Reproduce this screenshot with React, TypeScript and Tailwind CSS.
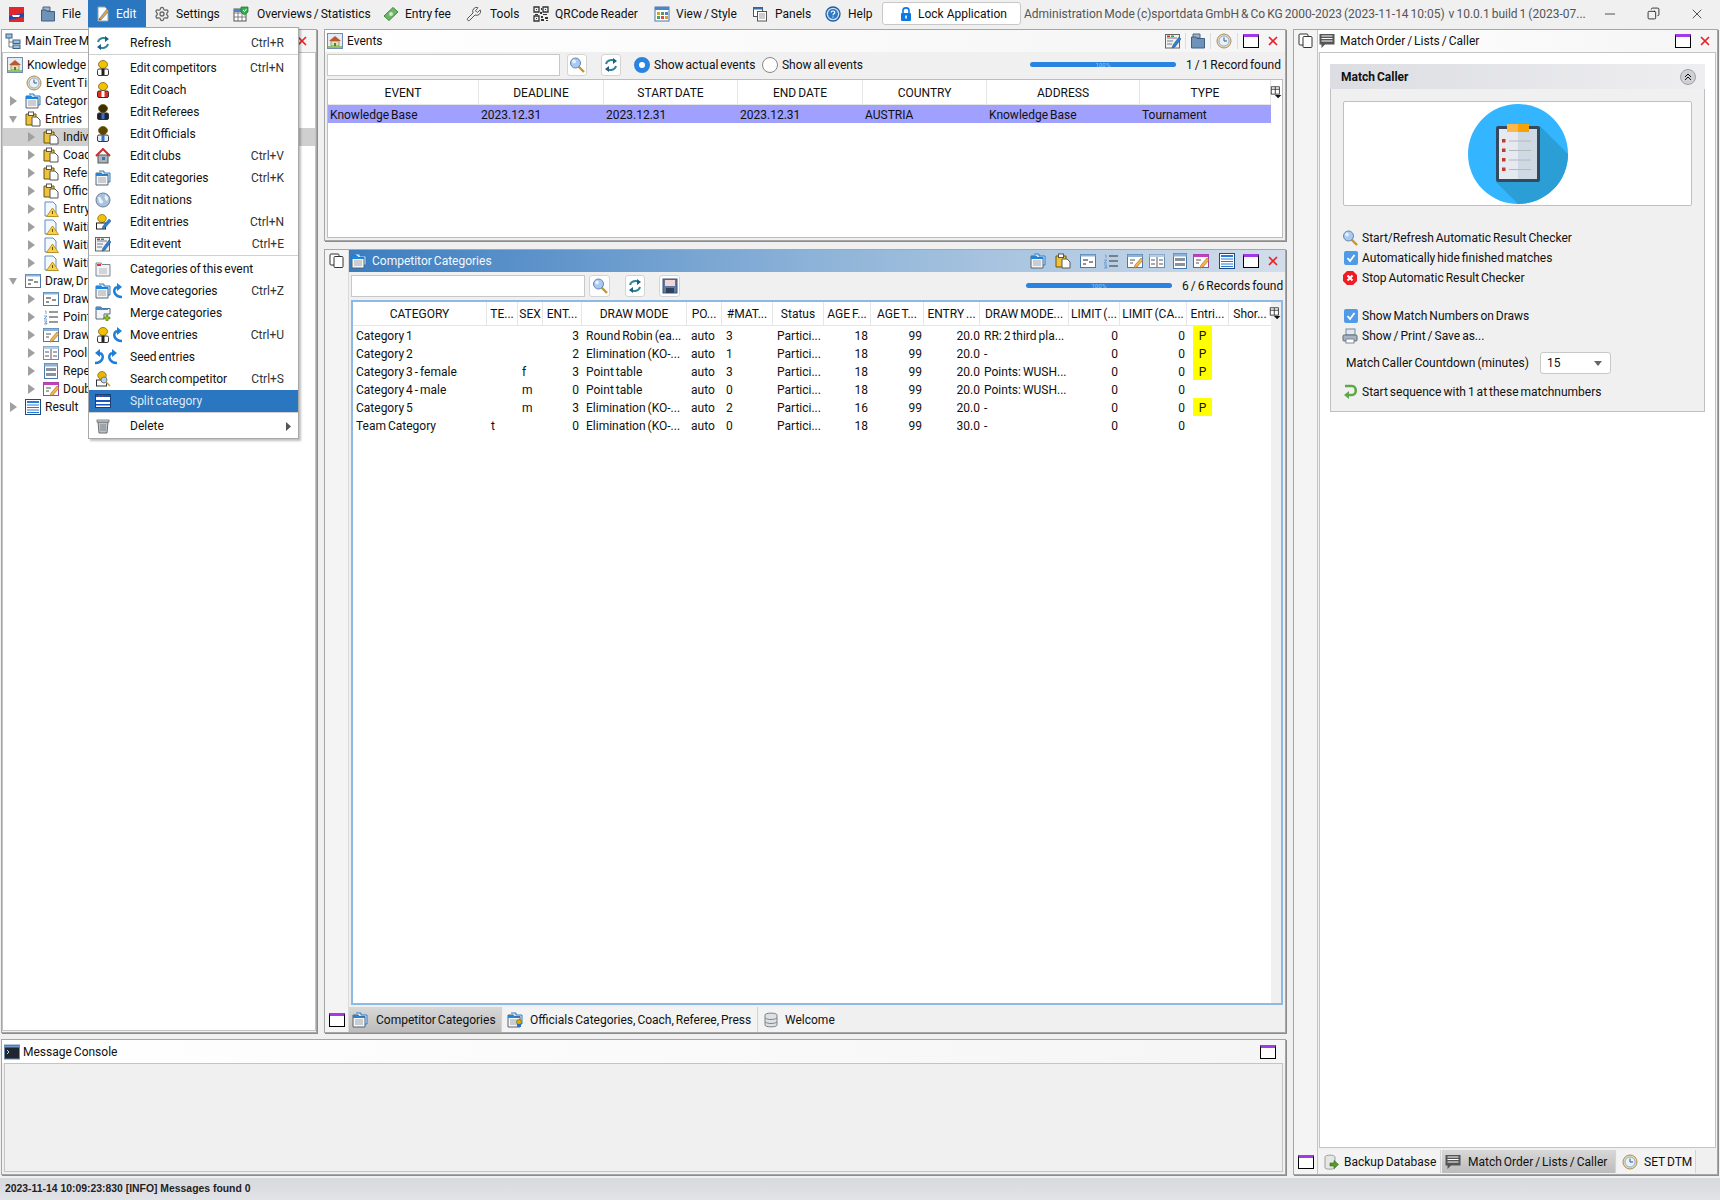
import React from 'react'
import { Settings, Wrench, Minus, X, Copy } from 'lucide-react'

const Svg: React.FC<{ children: React.ReactNode; className?: string }> = ({ children, className }) => (
  <svg viewBox="0 0 16 16" className={className ?? 'w-4 h-4 shrink-0'}>{children}</svg>
)

const Logo = () => (
  <Svg>
    <rect x="1" y="1" width="15" height="15" fill="#e3262b" />
    <path d="M1 10 L16 7 V11 L1 14 Z" fill="#1f4aa8" />
    <path d="M4 9 H12 L11 11 H5 Z" fill="#fff" />
  </Svg>
)
const LockIco = () => (
  <svg viewBox="0 0 12 16" className="w-[12px] h-[16px] shrink-0">
    <path d="M3 7 V4.500 C3 1 9 1 9 4.500 V7" fill="none" stroke="#0a78e6" strokeWidth="1.600" />
    <rect x="1" y="7" width="10" height="8" rx="1" fill="#0a78e6" />
    <rect x="5.200" y="9.500" width="1.600" height="3" fill="#fff" />
  </svg>
)
const FileIco = () => (
  <Svg>
    <path d="M3 1 H10 V5 H3 Z" fill="#9fb4c9" stroke="#4c6783" />
    <path d="M1.500 4 H6 L7 5.500 H14.500 V15 H1.500 Z" fill="#6f93b8" stroke="#3f5f80" />
  </Svg>
)
const EditIco = () => (
  <Svg>
    <path d="M3 1 H10 L13 4 V15 H3 Z" fill="#fff" stroke="#8aa" />
    <path d="M4 13 L12 3 L14 5 L6 14 Z" fill="#e8a33a" stroke="#2f6fc0" strokeWidth=".6" />
    <path d="M3.500 14.500 L4 12.500 L6 14 Z" fill="#d3343a" />
  </Svg>
)
const OverviewIco = () => (
  <Svg>
    <rect x="1" y="3" width="12" height="12" fill="#fff" stroke="#555" />
    <path d="M1 7 H13 M1 11 H13 M5 3 V15 M9 3 V15" stroke="#666" strokeWidth=".8" />
    <rect x="1" y="3" width="12" height="3" fill="#4a86c8" />
    <path d="M8 1 H15 V6 L11.500 9 L8 6 Z" fill="#35b04a" stroke="#14702a" strokeWidth=".7" />
    <path d="M10 4 L11.500 5.500 L13.500 3" stroke="#fff" fill="none" />
  </Svg>
)
const MoneyIco = () => (
  <Svg>
    <path d="M1 10 L10 1.500 L15 6 L6 14.500 Z" fill="#6cb665" stroke="#3e8a3a" />
    <circle cx="8" cy="8" r="2" fill="#cfe8c7" />
  </Svg>
)
const QrIco = () => (
  <Svg>
    <path d="M1 1 H6 V6 H1 Z M10 1 H15 V6 H10 Z M1 10 H6 V15 H1 Z" fill="none" stroke="#333" strokeWidth="1.300" />
    <path d="M3 3 H4 V4 H3 Z M12 3 H13 V4 H12 Z M3 12 H4 V13 H3 Z M8 2 H9 V4 H8 Z M7 6 H9 V8 H7 Z M2 8 H5 V9 H2 Z M10 8 H14 V9 H10 Z M8 10 H10 V12 H8 Z M12 11 H15 V13 H12 Z M8 13 H11 V15 H8 Z M13 14 H15 V15 H13 Z" fill="#333" />
  </Svg>
)
const ViewIco = () => (
  <Svg>
    <rect x="1" y="1" width="14" height="14" fill="#fff" stroke="#4a78b0" />
    <rect x="1" y="1" width="14" height="3" fill="#4a86c8" />
    <rect x="3" y="6" width="3" height="3" fill="#e0a020" />
    <rect x="7" y="6" width="3" height="3" fill="#50a050" />
    <rect x="11" y="6" width="3" height="3" fill="#5080d0" />
    <rect x="3" y="10" width="3" height="3" fill="#50a050" />
    <rect x="7" y="10" width="3" height="3" fill="#d05050" />
    <rect x="11" y="10" width="3" height="3" fill="#e0a020" />
  </Svg>
)
const PanelsIco = () => (
  <Svg>
    <rect x="1.500" y="1.500" width="9" height="9" fill="#fff" stroke="#555" />
    <rect x="1.500" y="1.500" width="9" height="2" fill="#3a6ea8" />
    <rect x="5.500" y="5.500" width="9" height="9.500" fill="#fff" stroke="#555" />
    <path d="M7 8 H13 M7 10 H13 M7 12 H13" stroke="#999" />
  </Svg>
)
const HelpIco = () => (
  <Svg>
    <circle cx="8" cy="8" r="7" fill="#cfe0f2" stroke="#1f5da0" strokeWidth="1.300" />
    <circle cx="8" cy="8" r="5" fill="#2f79c4" />
    <path d="M6.200 6.500 C6.200 4.500 9.800 4.500 9.800 6.500 C9.800 7.800 8 7.800 8 9.300 M8 10.600 V11.600" stroke="#fff" strokeWidth="1.200" fill="none" />
  </Svg>
)
const TreeIco = () => (
  <Svg>
    <path d="M4 4 V14 H8 M4 9 H8" stroke="#6a7a8a" fill="none" />
    <rect x="1" y="1" width="6" height="4" fill="#9cc0e4" stroke="#40607e" />
    <rect x="8" y="7" width="7" height="3.500" fill="#9cc0e4" stroke="#40607e" />
    <rect x="8" y="12" width="7" height="3.500" fill="#9cc0e4" stroke="#40607e" />
  </Svg>
)
const HomeIco = () => (
  <Svg>
    <rect x="0.500" y="0.500" width="15" height="15" fill="#e4edf5" stroke="#6d8db0" />
    <path d="M2 8 L8 3 L14 8 Z" fill="#c2562e" />
    <rect x="4" y="8" width="8" height="5" fill="#e9dcb0" stroke="#806a40" strokeWidth=".6" />
    <rect x="7" y="10" width="2" height="3" fill="#5a7f3a" />
    <rect x="1" y="13" width="14" height="2" fill="#8fc06a" />
  </Svg>
)
const ClockIco = () => (
  <Svg>
    <circle cx="8" cy="8" r="7" fill="#e8dcb8" stroke="#a88e5a" />
    <circle cx="8" cy="8" r="5" fill="#e8f0fa" stroke="#7fa0c8" strokeWidth=".8" />
    <path d="M8 4.500 V8 H11" stroke="#35597f" fill="none" />
  </Svg>
)
const CatIco = ({ person }: { person?: boolean }) => (
  <Svg>
    <path d="M4 1 H9 V3 H15 V12 H13" fill="#cfe6fa" stroke="#2f7fc8" />
    <path d="M1 3 H6 L7 4.500 H13 V15 H1 Z" fill="#f3f5f7" stroke="#5a6570" />
    <path d="M1 3 H6 L7 4.500 H13 V6 H1 Z" fill="#1f86e0" />
    <path d="M3 8 H11 M3 10 H11 M3 12 H11" stroke="#a0a6ac" />
    {person && <circle cx="12" cy="10" r="2.500" fill="#e0b000" stroke="#554400" strokeWidth=".5" />}
    {person && <rect x="10" y="12" width="4" height="3" fill="#2e6fc4" />}
  </Svg>
)
const ClipIco = () => (
  <Svg>
    <path d="M1 3 H11 V14 H1 Z" fill="#eec33c" stroke="#6b5310" />
    <rect x="3.500" y="1" width="5" height="3.500" fill="#fff" stroke="#555" />
    <path d="M7 6 H12 L15 9 V15 H7 Z" fill="#fff" stroke="#555" />
  </Svg>
)
const WarnIco = () => (
  <Svg>
    <path d="M2 1 H10 L13 4 V15 H2 Z" fill="#f2f7fc" stroke="#5a8fc8" />
    <path d="M9.500 7 L15.500 15.500 H3.500 Z" fill="#f6d248" stroke="#a98414" strokeWidth=".8" />
    <path d="M9.500 10 V13" stroke="#6a4a00" />
  </Svg>
)
const DrawIco = () => (
  <Svg>
    <rect x="0.500" y="1.500" width="15" height="13" fill="#fff" stroke="#4a78a8" />
    <rect x="0.500" y="1.500" width="15" height="2" fill="#8db2d8" />
    <path d="M3 7 H8 M3 11 H6 M9 9 H13" stroke="#222" />
  </Svg>
)
const PointsIco = () => (
  <Svg>
    <path d="M6 3 H15 M6 8 H15 M6 13 H15" stroke="#333" />
    <path d="M2 2 H3 V5 M1 7 H4 L1 10 H4 M1 12 H4 L2 14 H4 V15 H1" stroke="#6a98cc" fill="none" strokeWidth=".9" />
  </Svg>
)
const Pencil = () => <path d="M7 15 L8 12 L14 5 L16 7 L10 14 Z" fill="#f0b550" stroke="#a06a20" strokeWidth=".6" />
const DrawEditIco = ({ magenta }: { magenta?: boolean }) => (
  <Svg>
    <rect x="0.500" y="1.500" width="15" height="13" fill="#fff" stroke={magenta ? '#a040a0' : '#4a78a8'} />
    <rect x="0.500" y="1.500" width="15" height="2.500" fill={magenta ? '#c040c0' : '#8db2d8'} />
    <path d="M3 7 H8 M3 10 H6" stroke="#555" />
    <Pencil />
  </Svg>
)
const PoolIco = () => (
  <Svg>
    <rect x="0.500" y="1.500" width="15" height="13" fill="#fff" stroke="#6a8db0" />
    <rect x="0.500" y="1.500" width="15" height="2.500" fill="#b3cce4" />
    <path d="M8 4 V14 M2 7 H6 M2 11 H6 M10 7 H14 M10 11 H14" stroke="#556" />
  </Svg>
)
const RepeIco = () => (
  <Svg>
    <rect x="1.500" y="0.500" width="13" height="15" fill="#fff" stroke="#4a78a8" />
    <rect x="1.500" y="0.500" width="13" height="3" fill="#8db2d8" />
    <rect x="3" y="5" width="10" height="3" fill="#8a92a0" />
    <rect x="3" y="10" width="10" height="3" fill="#8a92a0" />
  </Svg>
)
const ResultIco = () => (
  <Svg>
    <rect x="0.500" y="0.500" width="15" height="15" fill="#fff" stroke="#1f4a80" />
    <rect x="2" y="2" width="12" height="2" fill="#2a78d8" />
    <path d="M2 6 H14 M2 8.500 H14 M2 11 H14 M2 13.500 H14" stroke="#2a78d8" />
  </Svg>
)
const Person = ({ head, body, extra }: { head: string; body: string; extra?: string }) => (
  <Svg>
    <ellipse cx="8" cy="4.500" rx="4.500" ry="4" fill={head} stroke="#6a5000" strokeWidth=".7" />
    <rect x="2.500" y="9" width="11" height="6.500" rx="1.500" fill={body} stroke="#222" strokeWidth=".9" />
    {extra && <rect x="6.500" y="9" width="3" height="6" fill={extra} />}
  </Svg>
)
const HouseIco = () => (
  <Svg>
    <path d="M1 8 L8 1 L15 8" fill="none" stroke="#d02a2a" strokeWidth="2" />
    <rect x="3" y="7" width="10" height="8" fill="#a8b4bf" stroke="#555" />
    <rect x="7" y="9" width="3" height="3" fill="#48709c" />
  </Svg>
)
const GlobeIco = () => (
  <Svg>
    <circle cx="8" cy="8" r="7" fill="#a8c2e2" stroke="#6c7f95" />
    <path d="M3 5 C6 4 6 8 8 9 C9 12 5 12 4 10 Z M10 3 C13 4 14 7 12 9 C10 8 9 5 10 3 Z" fill="#eef3f8" />
  </Svg>
)
const RefreshIco = () => (
  <Svg>
    <path d="M3 7 C4 3 9 2 12 4 M13 9 C12 13 7 14 4 12" stroke="#2d8596" strokeWidth="2" fill="none" />
    <path d="M10 1 L14 4 L10 7 Z M6 9 L2 12 L6 15 Z" fill="#1c5f88" />
  </Svg>
)
const EditEventIco = () => (
  <Svg>
    <rect x="0.500" y="1.500" width="14" height="13.500" fill="#f2f2f2" stroke="#666" />
    <path d="M2 5 H12 M2 8 H8 M2 11 H7" stroke="#6a7a8a" />
    <rect x="2" y="2.500" width="3" height="1.500" fill="#d03030" />
    <rect x="6" y="2.500" width="3" height="1.500" fill="#30a040" />
    <path d="M7 15 L8 12 L14 4 L16 6 L10 14 Z" fill="#3080d0" stroke="#1a4a80" strokeWidth=".5" />
  </Svg>
)
const CatsOfEventIco = () => (
  <Svg>
    <path d="M1 2 H6 L7 3.500 H15 V15 H1 Z" fill="#f2f4f6" stroke="#7a8590" />
    <rect x="2" y="3" width="4" height="2" fill="#d83a3a" />
    <path d="M4 8 H12 M4 10 H12 M4 12 H12" stroke="#b0b6bc" />
  </Svg>
)
const ArrowCurve = ({ flip }: { flip?: boolean }) => (
  <svg viewBox="0 0 12 16" className={`w-[12px] h-4 shrink-0 ${flip ? '-scale-x-100' : ''}`}>
    <path d="M11 14 C3 14 1 6 6 4" fill="none" stroke="#1f7fd8" strokeWidth="2.600" />
    <path d="M6 0 L11 4 L6 8 Z" fill="#1f7fd8" />
  </svg>
)
const MoveCatIco = () => (
  <span className="flex items-center"><CatIco /><ArrowCurve /></span>
)
const MergeIco = () => (
  <Svg>
    <path d="M1 2 H6 L7 3.500 H15 V9 H9 V14 H1 Z" fill="#f2f4f6" stroke="#55697c" />
    <path d="M1 2 H6 L7 3.500 H13 V5 H1 Z" fill="#3f8fd8" />
    <path d="M9 12 H11 V10 H13 V12 H15 V14 H13 V16 H11 V14 H9 Z" fill="#8fc020" stroke="#3c6a00" strokeWidth=".5" />
  </Svg>
)
const MoveEntryIco = () => (
  <span className="flex items-center">
    <Person head="#f2c100" body="#fff" extra="#222" />
    <ArrowCurve />
  </span>
)
const SeedIco = () => (
  <span className="flex items-center -ml-[1px]"><ArrowCurve flip /><ArrowCurve /></span>
)
const SearchPersonIco = () => (
  <Svg>
    <ellipse cx="7" cy="4.500" rx="4.300" ry="4" fill="#e8b800" stroke="#6a5000" strokeWidth=".6" />
    <rect x="1.500" y="9" width="10" height="6" fill="#fff" stroke="#333" />
    <circle cx="9" cy="9" r="3" fill="#b8d0ec" stroke="#6a7a90" />
    <path d="M11 11 L15 15" stroke="#c89a40" strokeWidth="1.500" />
  </Svg>
)
const SplitIco = () => (
  <Svg>
    <rect x="0.500" y="1.500" width="15" height="13" fill="#fff" stroke="#1b3f70" />
    <rect x="1" y="2" width="14" height="2" fill="#1d55c0" />
    <path d="M3 3 H5 M7 3 H8" stroke="#e04040" />
    <rect x="1" y="7" width="14" height="2" fill="#1d55c0" />
    <rect x="1" y="11" width="14" height="1.500" fill="#1d55c0" />
  </Svg>
)
const TrashIco = () => (
  <Svg>
    <path d="M3 4 H13 L12 15 H4 Z" fill="#bfc4c8" stroke="#6a6f74" />
    <path d="M6 6 V13 M8 6 V13 M10 6 V13" stroke="#808488" />
    <rect x="2" y="2" width="12" height="2" fill="#d8dadc" stroke="#6a6f74" strokeWidth=".8" />
  </Svg>
)
const SearchIco = () => (
  <Svg>
    <path d="M9 9 L15 15" stroke="#c9932e" strokeWidth="2.400" />
    <circle cx="6.500" cy="6" r="5" fill="#a8c9f0" stroke="#6385b0" />
    <circle cx="5" cy="4.500" r="2" fill="#e3effb" />
  </Svg>
)
const SaveIco = () => (
  <Svg>
    <rect x="1" y="1" width="14" height="14" fill="#5c7aa2" stroke="#3c5478" />
    <rect x="3" y="2" width="10" height="6" fill="#f4d4d4" />
    <rect x="4" y="10" width="8" height="5" fill="#30415c" />
  </Svg>
)
const WinIco = () => (
  <span className="w-[16px] h-[14px] border border-black border-t-[3px] border-t-[#a23be6] bg-white shrink-0 block" />
)
const CloseIco = () => <X className="w-[14px] h-[14px] shrink-0 text-[#e8232a]" strokeWidth={3} />
const PanesIco = () => (
  <Svg>
    <rect x="1" y="1" width="9" height="11" rx="1" fill="#fff" stroke="#333" />
    <rect x="5" y="3.500" width="9" height="11" rx="1" fill="#fff" stroke="#333" />
  </Svg>
)
const ChatIco = () => (
  <Svg>
    <path d="M0.500 1 H15.500 V11.500 H6 L2.500 15 V11.500 H0.500 Z" fill="#555" />
    <path d="M2.500 3 H13.500 M2.500 5.500 H13.500 M2.500 8 H13.500" stroke="#fff" />
  </Svg>
)
const ColsIco = () => (
  <svg viewBox="0 0 16 16" className="w-[13px] h-[13px] shrink-0">
    <rect x="1.500" y="1" width="10" height="9" fill="#fff" stroke="#222" />
    <path d="M1.500 4 H11.500 M6.500 1 V10" stroke="#222" />
    <path d="M6 11 H14 L10 15 Z" fill="#111" />
  </svg>
)
const CheckIco = () => (
  <span className="w-[14px] h-[14px] rounded-[2px] bg-[#4f9be8] flex items-center justify-center shrink-0">
    <svg viewBox="0 0 10 10" className="w-[10px] h-[10px]"><path d="M1.500 5 L4 8 L8.500 2" fill="none" stroke="#fff" strokeWidth="1.800" /></svg>
  </span>
)
const StopIco = () => (
  <Svg>
    <path d="M5 1 H11 L15 5 V11 L11 15 H5 L1 11 V5 Z" fill="#ee1c25" />
    <path d="M5.500 5.500 L10.500 10.500 M10.500 5.500 L5.500 10.500" stroke="#fff" strokeWidth="2" />
  </Svg>
)
const PrintIco = () => (
  <Svg>
    <rect x="4" y="1" width="9" height="6" fill="#dfe8f2" stroke="#7a8898" />
    <rect x="1" y="7" width="14" height="6" rx="1" fill="#a8b4c2" stroke="#5c6a78" />
    <rect x="4" y="11" width="8" height="4" fill="#fff" stroke="#7a8898" />
  </Svg>
)
const GreenArrowIco = () => (
  <Svg>
    <path d="M3 2 H10 C15 2 15 11 10 11 H5" fill="none" stroke="#5fa84a" strokeWidth="2.600" />
    <path d="M7 7 L2 11 L7 15 Z" fill="#5fa84a" />
  </Svg>
)
const BackupIco = () => (
  <Svg>
    <path d="M2 3 C2 0.500 12 0.500 12 3 V14 C12 15.500 2 15.500 2 14 Z" fill="#e4e7e4" stroke="#9aa09a" />
    <path d="M7 9 H11 V6.500 L15.500 10.500 L11 14.500 V12 H7 Z" fill="#5a9a2e" stroke="#2d6a10" strokeWidth=".6" />
  </Svg>
)
const DbIco = () => (
  <Svg>
    <path d="M2 3 C2 0.500 14 0.500 14 3 V13 C14 15.500 2 15.500 2 13 Z" fill="#dde1e5" stroke="#7c8489" />
    <path d="M2 6 C5 8 11 8 14 6 M2 10 C5 12 11 12 14 10" stroke="#7c8489" fill="none" />
  </Svg>
)
const ConsoleIco = () => (
  <Svg>
    <rect x="0.500" y="1" width="15" height="14" fill="#1f2630" stroke="#6c8db0" />
    <rect x="1" y="1.500" width="14" height="2" fill="#6f9bd0" />
    <path d="M3 6 L5 8 L3 10" stroke="#fff" fill="none" strokeWidth=".8" />
  </Svg>
)

const Triangle = ({ open }: { open?: boolean }) => (
  <svg viewBox="0 0 8 10" className="w-2 h-[10px] shrink-0">
    {open ? <path d="M0 2 H8 L4 9 Z" fill="#a0a0a0" /> : <path d="M1 0 L8 5 L1 10 Z" fill="#a0a0a0" />}
  </svg>
)

const topMenu = [
  { label: 'File', icon: <FileIco />, cls: 'w-[52px] pl-[4px] gap-[6px]' },
  { label: 'Edit', icon: <EditIco />, cls: 'w-[58px] pl-[7px] gap-[5px] bg-[#2a76c0] text-white' },
  { label: 'Settings', icon: <Settings className="w-4 h-4 text-[#666]" />, cls: 'w-[79px] pl-[8px] gap-[6px]' },
  { label: 'Overviews / Statistics', icon: <OverviewIco />, cls: 'w-[150px] pl-[8px] gap-[8px]' },
  { label: 'Entry fee', icon: <MoneyIco />, cls: 'w-[83px] pl-[8px] gap-[6px]' },
  { label: 'Tools', icon: <Wrench className="w-4 h-4 text-[#555]" strokeWidth={1.5} />, cls: 'w-[67px] pl-[8px] gap-[8px]' },
  { label: 'QRCode Reader', icon: <QrIco />, cls: 'w-[121px] pl-[8px] gap-[6px]' },
  { label: 'View / Style', icon: <ViewIco />, cls: 'w-[98px] pl-[8px] gap-[6px]' },
  { label: 'Panels', icon: <PanelsIco />, cls: 'w-[73px] pl-[8px] gap-[7px]' },
  { label: 'Help', icon: <HelpIco />, cls: 'w-[65px] pl-[8px] gap-[7px]' },
]

const menuItems: (null | { label: string; icon: React.ReactNode; key?: string; active?: boolean; arrow?: boolean })[] = [
  { label: 'Refresh', icon: <RefreshIco />, key: 'Ctrl+R' },
  null,
  { label: 'Edit competitors', icon: <Person head="#f2c100" body="#fff" extra="#222" />, key: 'Ctrl+N' },
  { label: 'Edit Coach', icon: <Person head="#f2c100" body="#e03020" extra="#fff" /> },
  { label: 'Edit Referees', icon: <Person head="#3a3000" body="#223" extra="#3a70c0" /> },
  { label: 'Edit Officials', icon: <Person head="#5a4800" body="#e8eef6" extra="#3a70c0" /> },
  { label: 'Edit clubs', icon: <HouseIco />, key: 'Ctrl+V' },
  { label: 'Edit categories', icon: <CatIco />, key: 'Ctrl+K' },
  { label: 'Edit nations', icon: <GlobeIco /> },
  {
    label: 'Edit entries',
    icon: (
      <Svg>
        <ellipse cx="7" cy="4.500" rx="4.300" ry="4" fill="#f2c100" stroke="#6a5000" strokeWidth=".6" />
        <rect x="1.500" y="9" width="9" height="6" fill="#fff" stroke="#222" />
        <path d="M7 15 L8 12 L14 5 L16 7 L10 14 Z" fill="#3080d0" stroke="#1a4a80" strokeWidth=".5" />
      </Svg>
    ),
    key: 'Ctrl+N',
  },
  { label: 'Edit event', icon: <EditEventIco />, key: 'Ctrl+E' },
  null,
  { label: 'Categories of this event', icon: <CatsOfEventIco /> },
  { label: 'Move categories', icon: <MoveCatIco />, key: 'Ctrl+Z' },
  { label: 'Merge categories', icon: <MergeIco /> },
  { label: 'Move entries', icon: <MoveEntryIco />, key: 'Ctrl+U' },
  { label: 'Seed entries', icon: <SeedIco /> },
  { label: 'Search competitor', icon: <SearchPersonIco />, key: 'Ctrl+S' },
  { label: 'Split category', icon: <SplitIco />, active: true },
  null,
  { label: 'Delete', icon: <TrashIco />, arrow: true },
]

const treeRows: { label: string; icon: React.ReactNode; cls: string; arrow?: 'open' | 'closed'; active?: boolean }[] = [
  { label: 'Knowledge Base', icon: <HomeIco />, cls: 'pl-[4px]' },
  { label: 'Event Timetable', icon: <ClockIco />, cls: 'pl-[23px]' },
  { label: 'Categories', icon: <CatIco />, cls: 'pl-[6px]', arrow: 'closed' },
  { label: 'Entries', icon: <ClipIco />, cls: 'pl-[6px]', arrow: 'open' },
  { label: 'Individual', icon: <ClipIco />, cls: 'pl-[24px]', arrow: 'closed', active: true },
  { label: 'Coach', icon: <ClipIco />, cls: 'pl-[24px]', arrow: 'closed' },
  { label: 'Referee', icon: <ClipIco />, cls: 'pl-[24px]', arrow: 'closed' },
  { label: 'Officials', icon: <ClipIco />, cls: 'pl-[24px]', arrow: 'closed' },
  { label: 'Entry', icon: <WarnIco />, cls: 'pl-[24px]', arrow: 'closed' },
  { label: 'Waiting', icon: <WarnIco />, cls: 'pl-[24px]', arrow: 'closed' },
  { label: 'Waiting', icon: <WarnIco />, cls: 'pl-[24px]', arrow: 'closed' },
  { label: 'Waiting', icon: <WarnIco />, cls: 'pl-[24px]', arrow: 'closed' },
  { label: 'Draw, Draw', icon: <DrawIco />, cls: 'pl-[6px]', arrow: 'open' },
  { label: 'Draw', icon: <DrawIco />, cls: 'pl-[24px]', arrow: 'closed' },
  { label: 'Point', icon: <PointsIco />, cls: 'pl-[24px]', arrow: 'closed' },
  { label: 'Draw', icon: <DrawEditIco />, cls: 'pl-[24px]', arrow: 'closed' },
  { label: 'Pool', icon: <PoolIco />, cls: 'pl-[24px]', arrow: 'closed' },
  { label: 'Repe', icon: <RepeIco />, cls: 'pl-[24px]', arrow: 'closed' },
  { label: 'Doub', icon: <DrawEditIco magenta />, cls: 'pl-[24px]', arrow: 'closed' },
  { label: 'Result', icon: <ResultIco />, cls: 'pl-[6px]', arrow: 'closed' },
]

const eventCols = ['w-[151px]', 'w-[125px]', 'w-[134px]', 'w-[125px]', 'w-[124px]', 'w-[153px]', 'w-[131px]']
const eventHead = ['EVENT', 'DEADLINE', 'START DATE', 'END DATE', 'COUNTRY', 'ADDRESS', 'TYPE']
const eventRow = ['Knowledge Base', '2023.12.31', '2023.12.31', '2023.12.31', 'AUSTRIA', 'Knowledge Base', 'Tournament']

const catCols = [
  'w-[134px]', 'w-[31px]', 'w-[25px]', 'w-[39px]', 'w-[105px]', 'w-[35px]', 'w-[51px]', 'w-[51px]',
  'w-[47px]', 'w-[53px]', 'w-[56px]', 'w-[89px]', 'w-[51px]', 'w-[67px]', 'w-[42px]', 'w-[43px]',
]
const catHead = ['CATEGORY', 'TE...', 'SEX', 'ENT...', 'DRAW MODE', 'PO...', '#MAT...', 'Status', 'AGE F...', 'AGE T...', 'ENTRY ...', 'DRAW MODE...', 'LIMIT (...', 'LIMIT (CA...', 'Entri...', 'Shor...']
// padding of each data cell, numbers sit on the right edge
const catCellCls: Record<number, string> = {
  0: 'pl-[3px]',
  3: 'text-right pr-[3px]',
  8: 'text-right pr-[3px]',
  9: 'text-right pr-[2px]',
  10: 'text-right',
  12: 'text-right pr-[2px]',
  13: 'text-right pr-[2px]',
}
const catRows = [
  ['Category 1', '', '', '3', 'Round Robin (ea...', 'auto', '3', 'Partici...', '18', '99', '20.0', 'RR: 2 third pla...', '0', '0', 'P', ''],
  ['Category 2', '', '', '2', 'Elimination (KO-...', 'auto', '1', 'Partici...', '18', '99', '20.0', '-', '0', '0', 'P', ''],
  ['Category 3 - female', '', 'f', '3', 'Point table', 'auto', '3', 'Partici...', '18', '99', '20.0', 'Points: WUSH...', '0', '0', 'P', ''],
  ['Category 4 - male', '', 'm', '0', 'Point table', 'auto', '0', 'Partici...', '18', '99', '20.0', 'Points: WUSH...', '0', '0', '', ''],
  ['Category 5', '', 'm', '3', 'Elimination (KO-...', 'auto', '2', 'Partici...', '16', '99', '20.0', '-', '0', '0', 'P', ''],
  ['Team Category', 't', '', '0', 'Elimination (KO-...', 'auto', '0', 'Partici...', '18', '99', '30.0', '-', '0', '0', '', ''],
]

const ToolBtn = ({ children, cls }: { children: React.ReactNode; cls: string }) => (
  <button className={`h-[22px] shrink-0 rounded-[3px] border border-[#d4d4d4] bg-white flex items-center justify-center ${cls}`}>
    {children}
  </button>
)

const Progress = ({ cls }: { cls: string }) => (
  <div className={`h-[5px] rounded-full bg-[#2a83e0] flex items-center justify-center ${cls}`}>
    <span className="text-[6px] leading-[5px] text-[#9cc4ee]">100 %</span>
  </div>
)

const HeaderCell = ({ label, cls }: { label: string; cls: string }) => (
  <div className={`${cls} shrink-0 h-full flex items-center justify-center border-r border-[#e6e6e6] whitespace-nowrap`}>
    {label}
  </div>
)

const Tab = ({ icon, label, cls, active }: { icon: React.ReactNode; label: string; cls: string; active?: boolean }) => (
  <div
    className={`${cls} shrink-0 h-full flex items-center whitespace-nowrap border-r border-[#d4d4d4] ${
      active ? 'bg-gradient-to-b from-[#d8d8d8] to-[#bcbcbc]' : 'bg-[#f3f3f3]'
    }`}
  >
    {icon}
    <span>{label}</span>
  </div>
)

const panel = 'border border-[#a6a6a6] shadow-[1px_1px_0_#8c8c8c] bg-[#f0f0f0]'

export default function App() {
  return (
    <div className="relative w-[1720px] h-[1200px] overflow-hidden bg-[#f0f0f0] text-[12px] leading-[16px] [word-spacing:-1px] text-[#111] font-['Roboto','Open_Sans',sans-serif]">
      {/* Top menu */}
      <div className="h-[27px] flex items-stretch pl-[8px]">
        <div className="flex items-center w-[28px] shrink-0"><Logo /></div>
        {topMenu.map((m) => (
          <div key={m.label} className={`flex items-center shrink-0 whitespace-nowrap ${m.cls}`}>
            {m.icon}
            <span>{m.label}</span>
          </div>
        ))}
        <button className="my-[2px] w-[139px] shrink-0 rounded-[3px] border border-[#c8c8c8] bg-white flex items-center pl-[17px] gap-[6px]">
          <LockIco />
          <span className="whitespace-nowrap">Lock Application</span>
        </button>
        <div className="ml-[3px] flex items-center whitespace-nowrap text-[#555] w-[566px] shrink-0">
          Administration Mode (c)sportdata GmbH &amp; Co KG 2000-2023 (2023-11-14 10:05)&nbsp; v 10.0.1 build 1 (2023-07...
        </div>
        <div className="flex items-center gap-[29px] pl-[12px] text-black">
          <Minus className="w-[16px] h-[16px]" strokeWidth={1} />
          <Copy className="w-[13px] h-[13px] -scale-x-100" strokeWidth={1.4} />
          <X className="w-[16px] h-[16px]" strokeWidth={1} />
        </div>
      </div>

      {/* Body */}
      <div className="h-[1151px] flex pl-[1px] pt-[2px]">
        <div className="w-[1285px] shrink-0 flex flex-col">
          <div className="h-[1004px] flex gap-[7px]">
            {/* Main tree */}
            <div className={`w-[316px] shrink-0 flex flex-col ${panel}`}>
              <div className="h-[22px] shrink-0 flex items-center pl-[3px] pr-[7px] gap-[4px] bg-gradient-to-r from-white to-[#f5f5f5]">
                <TreeIco />
                <span className="whitespace-nowrap">Main Tree Menu</span>
                <span className="ml-auto"><CloseIco /></span>
              </div>
              <div className="flex-1 mb-[1px] border border-[#c4c4c4] bg-white pt-[3px]">
                {treeRows.map((r, i) => (
                  <div key={i} className={`h-[18px] flex items-center ${r.cls} ${r.active ? 'bg-[#cfcfcf]' : ''}`}>
                    {r.arrow && <span className="mr-[8px]"><Triangle open={r.arrow === 'open'} /></span>}
                    {r.icon}
                    <span className="ml-[4px] whitespace-nowrap">{r.label}</span>
                  </div>
                ))}
              </div>
            </div>

            {/* Centre */}
            <div className="w-[962px] shrink-0 flex flex-col gap-[8px]">
              <div className={`h-[212px] shrink-0 flex flex-col ${panel}`}>
                <div className="h-[22px] shrink-0 flex items-center pl-[2px] pr-[5px] bg-gradient-to-r from-white to-[#f5f5f5]">
                  <HomeIco />
                  <span className="ml-[4px]">Events</span>
                  <div className="ml-auto flex items-center">
                    <span className="pr-[4px] border-r border-[#dcdcdc]"><EditEventIco /></span>
                    <span className="px-[4px] border-r border-[#dcdcdc]"><FileIco /></span>
                    <span className="px-[5px] border-r border-[#dcdcdc]"><ClockIco /></span>
                    <span className="ml-[5px] mr-[7px]"><WinIco /></span>
                    <CloseIco />
                  </div>
                </div>
                <div className="h-[27px] shrink-0 flex items-center pl-[2px] pb-[2px]">
                  <div className="w-[233px] h-[22px] shrink-0 bg-white border border-[#c8c8c8]" />
                  <ToolBtn cls="ml-[7px] w-[20px]"><SearchIco /></ToolBtn>
                  <ToolBtn cls="ml-[14px] w-[20px]"><RefreshIco /></ToolBtn>
                  <span className="ml-[13px] w-[16px] h-[16px] rounded-full border-[5px] border-[#2a83e0] bg-white shrink-0" />
                  <span className="ml-[4px] whitespace-nowrap">Show actual events</span>
                  <span className="ml-auto w-[16px] h-[16px] rounded-full border border-[#888] bg-white shrink-0" />
                  <span className="ml-[4px] whitespace-nowrap">Show all events</span>
                  <Progress cls="ml-[167px] w-[146px] shrink-0" />
                  <span className="ml-[10px] w-[99px] shrink-0 whitespace-nowrap">1 / 1 Record found</span>
                </div>
                <div className="flex-1 mx-[2px] mb-[2px] border border-[#bdbdbd] bg-white relative">
                  <div className="h-[25px] flex border-b border-[#e6e6e6] w-[943px]">
                    {eventHead.map((h, i) => <HeaderCell key={h} label={h} cls={`${eventCols[i]} pt-[1px]`} />)}
                  </div>
                  <div className="h-[18px] flex items-center bg-[#a0a0ff] w-[943px] pt-[1px]">
                    {eventRow.map((c, i) => (
                      <div key={i} className={`${eventCols[i]} shrink-0 pl-[2px] whitespace-nowrap`}>{c}</div>
                    ))}
                  </div>
                  <div className="absolute top-[6px] -right-[1px]"><ColsIco /></div>
                </div>
              </div>

              <div className={`flex-1 flex min-h-0 ${panel}`}>
                <div className="w-[24px] shrink-0 flex flex-col items-center justify-between pt-[3px] pb-[5px] border-r border-[#dadada] bg-[#f4f4f4]">
                  <PanesIco />
                  <WinIco />
                </div>
                <div className="flex-1 flex flex-col min-w-0">
                  <div className="h-[22px] shrink-0 flex items-center pl-[2px] pr-[5px] bg-gradient-to-r from-[#3a7dc0] via-[#8db3d8] to-[#d2deea]">
                    <CatIco />
                    <span className="ml-[5px] text-[#f4f8fc]">Competitor Categories</span>
                    <div className="ml-auto flex items-center">
                      <CatIco />
                      <span className="ml-[9px]"><ClipIco /></span>
                      <span className="ml-[9px]"><DrawIco /></span>
                      <span className="ml-[7px]"><PointsIco /></span>
                      <span className="ml-[8px]"><DrawEditIco /></span>
                      <span className="ml-[6px]"><PoolIco /></span>
                      <span className="ml-[7px]"><RepeIco /></span>
                      <span className="ml-[5px]"><DrawEditIco magenta /></span>
                      <span className="ml-[10px]"><ResultIco /></span>
                      <span className="ml-[8px] mr-[7px]"><WinIco /></span>
                      <CloseIco />
                    </div>
                  </div>
                  <div className="h-[28px] shrink-0 flex items-center pl-[2px] pb-[1px]">
                    <div className="w-[234px] h-[22px] shrink-0 bg-white border border-[#c8c8c8]" />
                    <ToolBtn cls="ml-[4px] w-[21px]"><SearchIco /></ToolBtn>
                    <ToolBtn cls="ml-[15px] w-[20px]"><RefreshIco /></ToolBtn>
                    <ToolBtn cls="ml-[14px] w-[21px]"><SaveIco /></ToolBtn>
                    <Progress cls="ml-[346px] w-[146px] shrink-0" />
                    <span className="ml-[10px] w-[103px] shrink-0 whitespace-nowrap">6 / 6 Records found</span>
                  </div>
                  <div className="flex-1 mx-[2px] border-2 border-[#8db9e6] bg-white relative min-h-0">
                    <div className="h-[24px] flex border-b border-[#e6e6e6] w-[919px]">
                      {catHead.map((h, i) => <HeaderCell key={h} label={h} cls={catCols[i]} />)}
                    </div>
                    {catRows.map((row, ri) => (
                      <div key={ri} className="h-[18px] flex items-center">
                        {row.map((c, i) =>
                          i === 14 ? (
                            <div key={i} className={`${catCols[i]} shrink-0 h-full pl-[6px]`}>
                              {c && <span className="w-[19px] h-full pt-[1px] bg-[#ffff00] flex items-center justify-center">{c}</span>}
                            </div>
                          ) : (
                            <div key={i} className={`${catCols[i]} shrink-0 pt-[1px] whitespace-nowrap ${catCellCls[i] ?? 'pl-[4px]'}`}>
                              {c}
                            </div>
                          ),
                        )}
                      </div>
                    ))}
                    <div className="absolute top-0 right-0 w-[10px] h-full bg-[#f0f0f0]">
                      <div className="absolute top-[5px] -right-[1px]"><ColsIco /></div>
                    </div>
                  </div>
                  <div className="h-[27px] shrink-0 flex items-stretch pt-[2px]">
                    <Tab active cls="w-[153px] gap-[8px] pl-[3px]" icon={<CatIco />} label="Competitor Categories" />
                    <Tab cls="w-[255px] gap-[7px] pl-[4px] ml-[1px]" icon={<CatIco person />} label="Officials Categories, Coach, Referee, Press" />
                    <Tab cls="w-[70px] gap-[6px] pl-[4px] ml-[1px] border-r-0" icon={<DbIco />} label="Welcome" />
                  </div>
                </div>
              </div>
            </div>
          </div>

          {/* Console */}
          <div className={`mt-[6px] h-[136px] flex flex-col ${panel}`}>
            <div className="h-[23px] shrink-0 flex items-center pl-[2px] pr-[9px] bg-gradient-to-r from-white to-[#f5f5f5]">
              <ConsoleIco />
              <span className="ml-[3px]">Message Console</span>
              <span className="ml-auto"><WinIco /></span>
            </div>
            <div className="flex-1 mx-[2px] mb-[2px] border border-[#c4c4c4] bg-[#f0f0f0]" />
          </div>
        </div>

        {/* Right panel */}
        <div className={`ml-[7px] w-[425px] h-[1146px] shrink-0 flex ${panel}`}>
          <div className="w-[24px] shrink-0 flex flex-col items-center justify-between pt-[3px] pb-[5px] border-r border-[#c4c4c4] bg-[#f4f4f4]">
            <PanesIco />
            <WinIco />
          </div>
          <div className="flex-1 flex flex-col min-w-0">
            <div className="h-[22px] shrink-0 flex items-center pl-[1px] pr-[5px] bg-gradient-to-r from-white to-[#f5f5f5]">
              <ChatIco />
              <span className="ml-[5px]">Match Order / Lists / Caller</span>
              <span className="ml-auto mr-[7px]"><WinIco /></span>
              <CloseIco />
            </div>
            <div className="flex-1 mx-[1px] border border-[#c4c4c4] bg-white px-[10px] pt-[11px] min-h-0">
              <div className="h-[25px] flex items-center justify-between pl-[11px] pr-[9px] bg-gradient-to-r from-[#dcdde2] to-[#eeeef0]">
                <span className="font-bold">Match Caller</span>
                <span className="w-[16px] h-[16px] rounded-full bg-[#cfd0d4] border border-[#a0a0a0] flex items-center justify-center">
                  <svg viewBox="0 0 10 10" className="w-[10px] h-[10px]"><path d="M2 5 L5 2 L8 5 M2 8 L5 5 L8 8" fill="none" stroke="#111" /></svg>
                </span>
              </div>
              <div className="h-[323px] border border-t-0 border-[#c0c0c0] bg-[#f0f0f0] px-[12px] pt-[12px]">
                <div className="h-[105px] rounded-[2px] border border-[#c0c0c0] bg-white flex items-center justify-center">
                  <svg viewBox="0 0 100 100" className="w-[100px] h-[100px]">
                    <defs><clipPath id="disc"><circle cx="50" cy="50" r="50" /></clipPath></defs>
                    <circle cx="50" cy="50" r="50" fill="#33b6ff" />
                    <polygon points="72,22 110,60 110,110 60,110 28,78" fill="#2b9ed6" clipPath="url(#disc)" />
                    <rect x="28" y="22" width="44" height="56" rx="2" fill="#34495e" />
                    <rect x="31" y="25" width="19" height="50" fill="#e6eaf0" />
                    <rect x="50" y="25" width="19" height="50" fill="#cfd9e3" />
                    <rect x="39" y="20" width="11" height="8" fill="#ffb64a" />
                    <rect x="50" y="20" width="11" height="8" fill="#f6a200" />
                    <rect x="34" y="35" width="3.500" height="3.500" fill="#c0392b" />
                    <rect x="34" y="44.500" width="3.500" height="3.500" fill="#c0392b" />
                    <rect x="34" y="54" width="3.500" height="3.500" fill="#c0392b" />
                    <rect x="34" y="63.500" width="3.500" height="3.500" fill="#c0392b" />
                    <path d="M41 37 H63 M41 46.500 H63 M41 56 H63 M41 65.500 H63" stroke="#b4b8ba" />
                  </svg>
                </div>
                <div className="pt-[22px] flex flex-col">
                  <div className="h-[20px] flex items-center gap-[4px] -ml-[1px]"><SearchIco /><span>Start/Refresh Automatic Result Checker</span></div>
                  <div className="h-[20px] flex items-center gap-[4px] pl-[1px]"><CheckIco /><span>Automatically hide finished matches</span></div>
                  <div className="h-[20px] flex items-center gap-[4px] -ml-[1px]"><StopIco /><span>Stop Automatic Result Checker</span></div>
                  <div className="h-[20px] mt-[18px] flex items-center gap-[4px] pl-[1px]"><CheckIco /><span>Show Match Numbers on Draws</span></div>
                  <div className="h-[20px] flex items-center gap-[4px] -ml-[1px]"><PrintIco /><span>Show / Print / Save as...</span></div>
                  <div className="mt-[6px] h-[22px] flex items-center pl-[3px]">
                    <span className="w-[194px] shrink-0 whitespace-nowrap">Match Caller Countdown (minutes)</span>
                    <div className="w-[71px] h-[22px] rounded-[3px] border border-[#c8c8c8] bg-white flex items-center justify-between pl-[6px] pr-[8px]">
                      <span>15</span>
                      <svg viewBox="0 0 8 5" className="w-2 h-[5px]"><path d="M0 0 H8 L4 5 Z" fill="#666" /></svg>
                    </div>
                  </div>
                  <div className="h-[20px] mt-[8px] flex items-center gap-[4px] -ml-[1px]"><GreenArrowIco /><span>Start sequence with 1 at these matchnumbers</span></div>
                </div>
              </div>
            </div>
            <div className="h-[26px] shrink-0 flex items-stretch pt-[2px] pb-[1px]">
              <Tab cls="w-[122px] gap-[5px] pl-[4px] ml-[1px]" icon={<BackupIco />} label="Backup Database" />
              <Tab active cls="w-[174px] gap-[7px] pl-[3px] ml-[1px]" icon={<ChatIco />} label="Match Order / Lists / Caller" />
              <Tab cls="w-[79px] gap-[6px] pl-[5px] ml-[1px]" icon={<ClockIco />} label="SET DTM" />
            </div>
          </div>
        </div>
      </div>

      {/* Status bar */}
      <div className="h-[22px] flex items-center pl-[5px] bg-gradient-to-b from-[#d8d9de] to-[#e2e3e7] [word-spacing:0] font-['Liberation_Sans',sans-serif] font-bold text-[10.4px] text-[#222]">
        2023-11-14 10:09:23:830 [INFO] Messages found 0
      </div>

      {/* Edit dropdown */}
      <div className="absolute left-[88px] top-[27px] w-[211px] bg-white border border-[#a8a8a8] shadow-[2px_2px_2px_rgba(0,0,0,0.25)] pt-[4px] pb-[1px]">
        {menuItems.map((it, i) =>
          it === null ? (
            <div key={i} className="h-[3px] border-t border-[#d0d0d0]" />
          ) : (
            <div
              key={i}
              className={`h-[22px] flex items-center whitespace-nowrap ${it.active ? 'bg-[#2a76c0] text-[#dfeaf5]' : ''}`}
            >
              <span className="w-[41px] pl-[6px] shrink-0 flex items-center">{it.icon}</span>
              <span>{it.label}</span>
              {it.key && <span className="ml-auto pr-[14px] text-[#333]">{it.key}</span>}
              {it.arrow && (
                <svg viewBox="0 0 5 9" className="ml-auto mr-[7px] w-[5px] h-[9px]"><path d="M0 0 L5 4.500 L0 9 Z" fill="#555" /></svg>
              )}
            </div>
          ),
        )}
      </div>
    </div>
  )
}
